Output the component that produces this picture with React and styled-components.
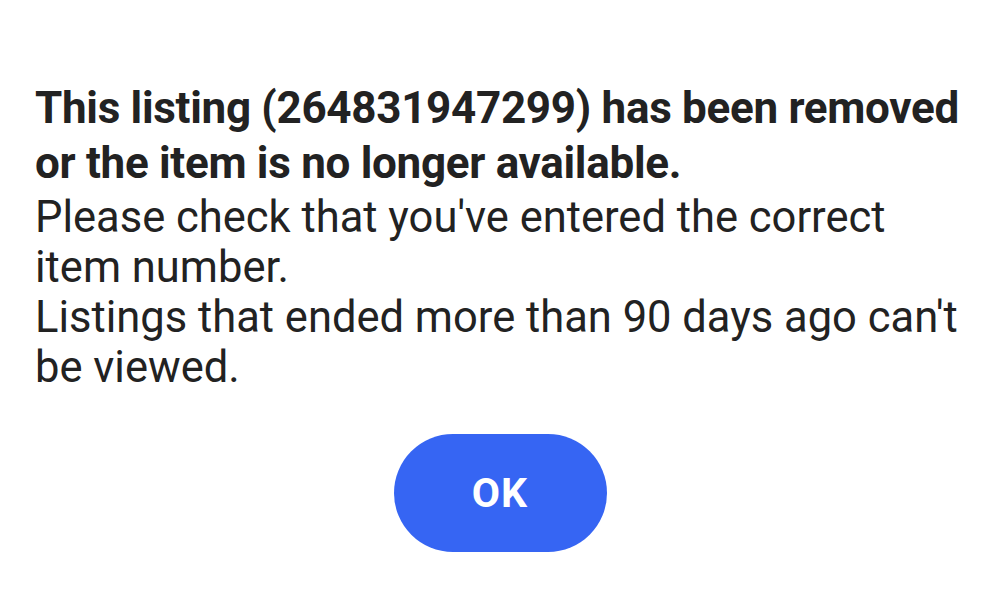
import styled, { createGlobalStyle } from 'styled-components';

const GlobalStyle = createGlobalStyle`
  html, body {
    margin: 0;
    padding: 0;
    background: #ffffff;
  }
  body {
    font-family: Roboto, "Noto Sans", Arial, sans-serif;
  }
`;

const App = () => {
  return (
    <>
      <GlobalStyle />
      <Wrapper>
        <Message>
          <Title>
            This listing (264831947299) has been removed or the item is no
            longer available.
          </Title>
          <Text>Please check that you've entered the correct item number.</Text>
          <Text>Listings that ended more than 90 days ago can't be viewed.</Text>
        </Message>
        <ButtonRow>
          <OkButton type='button'>OK</OkButton>
        </ButtonRow>
      </Wrapper>
    </>
  );
};

const Wrapper = styled.main`
  width: 1000px;
  height: 612px;
  box-sizing: border-box;
  padding: 81px 35px 0;
  display: flex;
  flex-direction: column;
  color: #222222;
`;

const Message = styled.div`
  width: 935px;
`;

const Title = styled.h2`
  margin: 0 0 2px;
  font-size: 44px;
  line-height: 55px;
  font-weight: 700;
  letter-spacing: -0.3px;
`;

const Text = styled.p`
  margin: 0;
  font-size: 43.5px;
  line-height: 50px;
  font-weight: 400;
`;

const ButtonRow = styled.div`
  display: flex;
  justify-content: center;
  margin-top: 41px;
`;

const OkButton = styled.button`
  width: 213px;
  height: 118px;
  border: none;
  border-radius: 59px;
  background: #3665f3;
  color: #ffffff;
  font-family: Roboto, Arial, sans-serif;
  font-size: 41px;
  font-weight: 700;
  letter-spacing: 1px;
  padding: 0;
  cursor: pointer;
`;

export default App;
